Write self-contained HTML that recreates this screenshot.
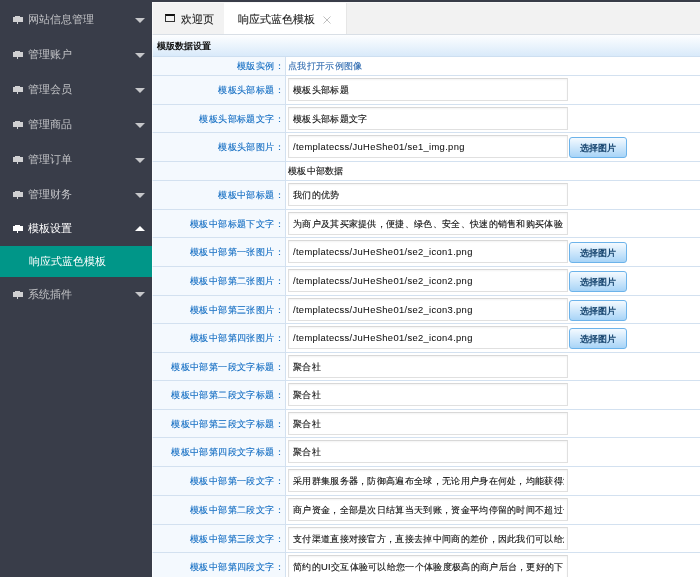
<!DOCTYPE html><html><head><meta charset="utf-8"><style>
*{margin:0;padding:0;box-sizing:border-box}
html,body{width:700px;height:577px;overflow:hidden;background:#393d49;font-family:"Liberation Sans",sans-serif}
#side,#main{will-change:transform}
.a{position:absolute}
#side{left:0;top:0;width:152px;height:577px;background:#393d49}
.mi{left:0;width:152px;height:35px;line-height:35px;font-size:11px;color:#c2c3c6;white-space:nowrap}
.mi .t{position:absolute;left:28px;top:0}
.mi.on{color:#fff}
.ico{position:absolute;left:13px;width:10px;height:5px;background:#d0d0d2}
.ico:before{content:"";position:absolute;left:2px;top:-1px;width:5px;height:1px;background:#d0d0d2}
.ico:after{content:"";position:absolute;left:4px;top:5px;width:1px;height:2px;background:#d0d0d2}
.on .ico,.on .ico:before,.on .ico:after{background:#fff}
.arr{position:absolute;left:135px;width:0;height:0;border-left:5px solid transparent;border-right:5px solid transparent}
.arr.down{border-top:5px solid #c6c7ca}
.arr.up{border-bottom:5px solid #fff}
#sub{left:0;top:246px;width:152px;height:31px;background:#009688}
#sub .t{position:absolute;left:29px;top:0;line-height:31px;font-size:11px;color:#fff;white-space:nowrap}
#main{left:152px;top:2px;width:548px;height:575px;background:#fff;overflow:hidden}
#tabs{left:0;top:0;width:548px;height:33px;background:#f2f2f2;border-top:1px solid #f8f8f8;border-bottom:1px solid #d9dfe6}
.tab{top:0px;height:31px;line-height:32px;font-size:11px;color:#222;-webkit-text-stroke:0.1px #222;white-space:nowrap}
#t1{left:0;width:72px}
#t2{left:72px;width:123px;background:#fff;border-right:1px solid #e6e6e6}
.wico{position:absolute;left:13px;top:11px;width:10px;height:8px;border:1px solid #333;border-top:2px solid #111}
.x{position:absolute;left:99px;color:#aaa;font-size:10px}
#hdr{left:0;top:33px;width:548px;height:22px;background:linear-gradient(#fdfeff,#d9eafa);border-bottom:1px solid #cddff1;font-size:9.2px;font-weight:bold;color:#111;line-height:23px;padding-left:5px;white-space:nowrap}
.row{left:0;width:548px;border-bottom:1px solid #d3e1f0;white-space:nowrap}
.lab{position:absolute;left:0;top:0;width:134px;height:100%;background:#f4f9fe;border-right:1px solid #d3e1f0;text-align:right;padding-right:1px;font-size:9.4px;color:#146ec3;letter-spacing:0.4px;-webkit-text-stroke:0.12px #146ec3}
.val{position:absolute;left:134px;top:0;right:0;height:100%;font-size:9.4px;color:#333}
.inp{position:absolute;left:2px;width:280px;height:23px;border:1px solid #e0e0e0;border-top-color:#d8d8d8;box-shadow:inset 0 1px 2px rgba(0,0,0,.05);background:#fff;padding-left:4px;font-size:9.4px;color:#111;-webkit-text-stroke:0.12px #111}
.inp i{font-style:normal;display:block;overflow:hidden;width:271px}
.btn{position:absolute;left:283px;width:58px;height:21px;border:1px solid #6cb3ea;border-radius:3px;background:linear-gradient(#f4faff,#a8d4f7);font-size:9.4px;font-weight:bold;color:#17456f;text-align:center}
</style></head><body>
<div id="side" class="a">
<div class="a mi" style="top:2px"><span class="ico" style="top:15px"></span><span class="t">网站信息管理</span><span class="arr down" style="top:16px"></span></div>
<div class="a mi" style="top:37px"><span class="ico" style="top:15px"></span><span class="t">管理账户</span><span class="arr down" style="top:16px"></span></div>
<div class="a mi" style="top:72px"><span class="ico" style="top:15px"></span><span class="t">管理会员</span><span class="arr down" style="top:16px"></span></div>
<div class="a mi" style="top:107px"><span class="ico" style="top:15px"></span><span class="t">管理商品</span><span class="arr down" style="top:16px"></span></div>
<div class="a mi" style="top:142px"><span class="ico" style="top:15px"></span><span class="t">管理订单</span><span class="arr down" style="top:16px"></span></div>
<div class="a mi" style="top:177px"><span class="ico" style="top:15px"></span><span class="t">管理财务</span><span class="arr down" style="top:16px"></span></div>
<div class="a mi on" style="top:211px"><span class="ico" style="top:15px"></span><span class="t">模板设置</span><span class="arr up" style="top:15px"></span></div>
<div class="a mi" style="top:277px"><span class="ico" style="top:15px"></span><span class="t">系统插件</span><span class="arr down" style="top:15px"></span></div>
<div id="sub" class="a"><span class="t">响应式蓝色模板</span></div>
</div>
<div id="main" class="a">
<div id="tabs" class="a"><div id="t1" class="a tab"><span class="wico"></span><span class="a" style="left:29px;top:0">欢迎页</span></div><div id="t2" class="a tab"><span class="a" style="left:14px;top:0">响应式蓝色模板</span><svg class="x" style="top:13px" width="8" height="8" viewBox="0 0 8 8"><path d="M0.5 0.5L7.5 7.5M7.5 0.5L0.5 7.5" stroke="#b8b8b8" stroke-width="0.9"/></svg></div></div>
<div id="hdr" class="a">模版数据设置</div>
<div class="a row" style="top:55px;height:19px"><div class="lab" style="line-height:18px">模版实例：</div><div class="val" style="line-height:18px;padding-left:2px;color:#2f6bb0;font-size:9.4px;letter-spacing:0.35px;-webkit-text-stroke:0.1px #2f6bb0">点我打开示例图像</div></div>
<div class="a row" style="top:74px;height:29px"><div class="lab" style="line-height:28px">模板头部标题：</div><div class="val"><div class="inp" style="top:2px;line-height:21px"><i><span style="letter-spacing:0.31px">模板头部标题</span></i></div></div></div>
<div class="a row" style="top:103px;height:28px"><div class="lab" style="line-height:27px">模板头部标题文字：</div><div class="val"><div class="inp" style="top:2px;line-height:21px"><i><span style="letter-spacing:0.31px">模板头部标题文字</span></i></div></div></div>
<div class="a row" style="top:131px;height:29px"><div class="lab" style="line-height:28px">模板头部图片：</div><div class="val"><div class="inp" style="top:2px;line-height:21px"><i><span style="font-size:9.4px;letter-spacing:0.33px;-webkit-text-stroke:0.05px #111">/templatecss/JuHeShe01/se1_img.png</span></i></div><div class="btn" style="top:4px;line-height:19px">选择图片</div></div></div>
<div class="a row" style="top:160px;height:19px"><div class="lab" style="line-height:18px"></div><div class="val" style="line-height:18px;padding-left:2px;color:#111;font-size:9.4px;letter-spacing:0.3px;-webkit-text-stroke:0.12px #111">模板中部数据</div></div>
<div class="a row" style="top:179px;height:29px"><div class="lab" style="line-height:28px">模板中部标题：</div><div class="val"><div class="inp" style="top:2px;line-height:21px"><i><span style="letter-spacing:0.31px">我们的优势</span></i></div></div></div>
<div class="a row" style="top:208px;height:28px"><div class="lab" style="line-height:27px">模板中部标题下文字：</div><div class="val"><div class="inp" style="top:2px;line-height:21px"><i><span style="letter-spacing:0.31px">为商户及其买家提供，便捷、绿色、安全、快速的销售和购买体验</span></i></div></div></div>
<div class="a row" style="top:236px;height:29px"><div class="lab" style="line-height:28px">模板中部第一张图片：</div><div class="val"><div class="inp" style="top:2px;line-height:21px"><i><span style="font-size:9.4px;letter-spacing:0.33px;-webkit-text-stroke:0.05px #111">/templatecss/JuHeShe01/se2_icon1.png</span></i></div><div class="btn" style="top:4px;line-height:19px">选择图片</div></div></div>
<div class="a row" style="top:265px;height:29px"><div class="lab" style="line-height:28px">模板中部第二张图片：</div><div class="val"><div class="inp" style="top:2px;line-height:21px"><i><span style="font-size:9.4px;letter-spacing:0.33px;-webkit-text-stroke:0.05px #111">/templatecss/JuHeShe01/se2_icon2.png</span></i></div><div class="btn" style="top:4px;line-height:19px">选择图片</div></div></div>
<div class="a row" style="top:294px;height:28px"><div class="lab" style="line-height:27px">模板中部第三张图片：</div><div class="val"><div class="inp" style="top:2px;line-height:21px"><i><span style="font-size:9.4px;letter-spacing:0.33px;-webkit-text-stroke:0.05px #111">/templatecss/JuHeShe01/se2_icon3.png</span></i></div><div class="btn" style="top:4px;line-height:19px">选择图片</div></div></div>
<div class="a row" style="top:322px;height:29px"><div class="lab" style="line-height:28px">模板中部第四张图片：</div><div class="val"><div class="inp" style="top:2px;line-height:21px"><i><span style="font-size:9.4px;letter-spacing:0.33px;-webkit-text-stroke:0.05px #111">/templatecss/JuHeShe01/se2_icon4.png</span></i></div><div class="btn" style="top:4px;line-height:19px">选择图片</div></div></div>
<div class="a row" style="top:351px;height:28px"><div class="lab" style="line-height:27px">模板中部第一段文字标题：</div><div class="val"><div class="inp" style="top:2px;line-height:21px"><i><span style="letter-spacing:0.31px">聚合社</span></i></div></div></div>
<div class="a row" style="top:379px;height:29px"><div class="lab" style="line-height:28px">模板中部第二段文字标题：</div><div class="val"><div class="inp" style="top:2px;line-height:21px"><i><span style="letter-spacing:0.31px">聚合社</span></i></div></div></div>
<div class="a row" style="top:408px;height:28px"><div class="lab" style="line-height:27px">模板中部第三段文字标题：</div><div class="val"><div class="inp" style="top:2px;line-height:21px"><i><span style="letter-spacing:0.31px">聚合社</span></i></div></div></div>
<div class="a row" style="top:436px;height:29px"><div class="lab" style="line-height:28px">模板中部第四段文字标题：</div><div class="val"><div class="inp" style="top:2px;line-height:21px"><i><span style="letter-spacing:0.31px">聚合社</span></i></div></div></div>
<div class="a row" style="top:465px;height:29px"><div class="lab" style="line-height:28px">模板中部第一段文字：</div><div class="val"><div class="inp" style="top:2px;line-height:21px"><i><span style="letter-spacing:0.31px">采用群集服务器，防御高遍布全球，无论用户身在何处，均能获得流畅安全可靠的体验</span></i></div></div></div>
<div class="a row" style="top:494px;height:29px"><div class="lab" style="line-height:28px">模板中部第二段文字：</div><div class="val"><div class="inp" style="top:2px;line-height:21px"><i><span style="letter-spacing:0.31px">商户资金，全部是次日结算当天到账，资金平均停留的时间不超过一天</span></i></div></div></div>
<div class="a row" style="top:523px;height:28px"><div class="lab" style="line-height:27px">模板中部第三段文字：</div><div class="val"><div class="inp" style="top:2px;line-height:21px"><i><span style="letter-spacing:0.31px">支付渠道直接对接官方，直接去掉中间商的差价，因此我们可以给您更低的费率</span></i></div></div></div>
<div class="a row" style="top:551px;height:29px"><div class="lab" style="line-height:28px">模板中部第四段文字：</div><div class="val"><div class="inp" style="top:2px;line-height:21px"><i><span style="letter-spacing:0.31px">简约的UI交互体验可以给您一个体验度极高的商户后台，更好的下单体验</span></i></div></div></div>
<div class="a" style="left:0;top:0;width:1px;height:575px;background:rgba(255,255,255,.6)"></div>
</div></body></html>
